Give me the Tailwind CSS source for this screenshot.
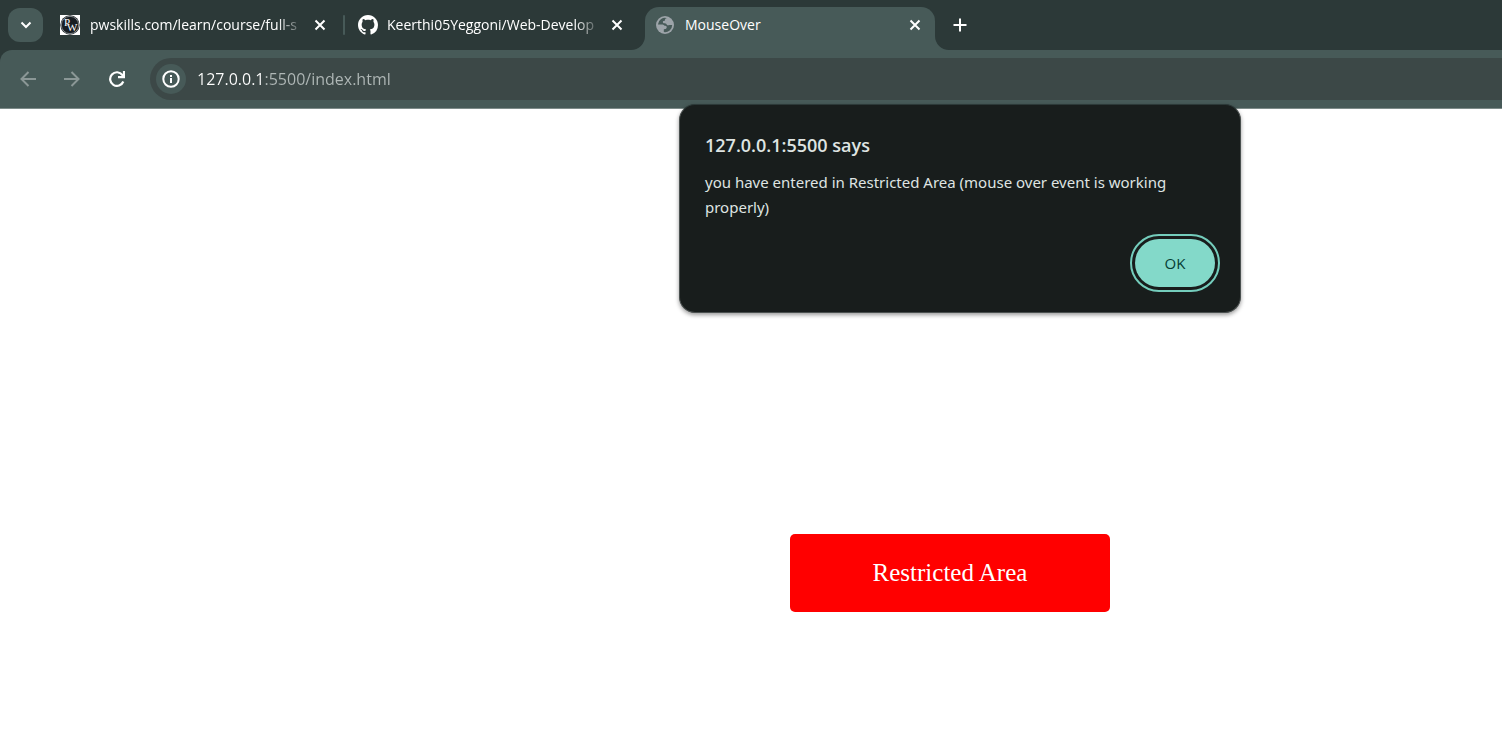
<!DOCTYPE html>
<html lang="en">
<head>
<meta charset="utf-8">
<meta name="viewport" content="width=device-width, initial-scale=1">
<title>MouseOver</title>
<script src="https://cdn.jsdelivr.net/npm/@tailwindcss/browser@4"></script>
</head>
<body class="relative flex min-h-screen flex-col overflow-x-hidden bg-white font-['Open_Sans','Noto_Sans',sans-serif]">
<header class="bg-[#2c3938]">
  <nav aria-label="Tabs" class="flex h-[50px] items-center text-white">
    <button aria-label="Search tabs" class="ml-2 flex h-[34px] w-[35px] shrink-0 items-center justify-center rounded-xl bg-[#475a58]">
      <svg class="size-4" viewBox="0 0 16 16" fill="none" stroke="currentColor" stroke-width="2"><path d="M3.500 5.500 8 10l4.500-4.500"/></svg>
    </button>
    <div class="flex w-[302px] shrink-0 items-center pl-[17px]">
      <svg class="size-5 shrink-0" viewBox="0 0 20 20" aria-hidden="true">
        <rect width="20" height="20" fill="#fff"/><circle cx="10" cy="10" r="9.700" fill="#202629"/><circle cx="10" cy="10" r="8.700" fill="#171d22" stroke="#858b8e"/>
        <text x="4" y="11" font-family="Liberation Serif" font-size="11" fill="#fff">P</text>
        <text x="7" y="16" font-family="Liberation Serif" font-size="11" fill="#fff">W</text>
      </svg>
      <a href="#" class="ml-[10px] w-[210px] text-[14px] leading-6 whitespace-nowrap [mask-image:linear-gradient(to_right,black_188px,transparent_214px)]">pwskills.com/learn/course/full-s</a>
      <button aria-label="Close pwskills tab" class="ml-3 flex size-4 items-center justify-center"><svg class="size-3" viewBox="0 0 12 12" fill="none" stroke="currentColor" stroke-width="2"><path d="m1.500 1.500 9 9m0-9-9 9"/></svg></button>
      <span class="ml-auto h-5 w-[2px] rounded bg-[#475a58]"></span>
    </div>
    <div class="flex w-[300px] shrink-0 items-center pl-[13px]">
      <svg class="size-5 shrink-0" viewBox="0 0 16 16" fill="currentColor" aria-hidden="true"><path d="M8 0C3.580 0 0 3.580 0 8c0 3.540 2.290 6.530 5.470 7.590.4.070.55-.17.55-.38 0-.19-.01-.82-.01-1.490-2.010.37-2.530-.49-2.690-.94-.09-.23-.48-.94-.82-1.130-.28-.15-.68-.52-.01-.53.63-.01 1.080.58 1.230.82.72 1.210 1.870.87 2.330.66.070-.52.280-.87.510-1.070-1.780-.2-3.640-.89-3.640-3.950 0-.87.310-1.590.820-2.150-.08-.2-.36-1.020.080-2.120 0 0 .67-.21 2.200.82.640-.18 1.320-.27 2-.27s1.360.090 2 .270c1.530-1.040 2.200-.82 2.200-.82.440 1.100.160 1.920.080 2.120.510.560.820 1.270.820 2.150 0 3.070-1.870 3.750-3.650 3.950.290.250.540.730.540 1.480 0 1.070-.01 1.930-.01 2.200 0 .210.150.460.550.380A8.010 8.010 0 0 0 16 8c0-4.420-3.580-8-8-8Z"/></svg>
      <a href="#" class="ml-[9px] w-[210px] text-[14px] leading-6 whitespace-nowrap [mask-image:linear-gradient(to_right,black_188px,transparent_214px)]">Keerthi05Yeggoni/Web-Develop</a>
      <button aria-label="Close GitHub tab" class="ml-3 flex size-4 items-center justify-center"><svg class="size-3" viewBox="0 0 12 12" fill="none" stroke="currentColor" stroke-width="2"><path d="m1.500 1.500 9 9m0-9-9 9"/></svg></button>
    </div>
    <div class="relative flex h-[43px] w-[290px] shrink-0 items-center self-end rounded-t-[14px] bg-[#475a58] pb-[7px] pl-[11px]">
      <svg class="absolute bottom-0 -left-[14px] size-[14px]" viewBox="0 0 14 14" fill="#475a58"><path d="M14 0v14H0A14 14 0 0 0 14 0Z"/></svg>
      <svg class="absolute -right-[14px] bottom-0 size-[14px]" viewBox="0 0 14 14" fill="#475a58"><path d="M0 0v14h14A14 14 0 0 1 0 0Z"/></svg>
      <svg class="size-[18px] shrink-0" viewBox="0 0 18 18" aria-hidden="true"><circle cx="9" cy="9" r="9" fill="#9da4a9"/><path fill="#475a58" d="M11.500 2.200C9.800 2 9 2.700 9 4c0 .8-.7 1-1.500 1.100-.8.200-.8 1.400-.3 1.900.5.400 2.300.1 3 .7.600.5.500 1.200 1.100 1.500.9.400 1.700-.4 2.600-.2.800.200 1.600.1 2.300 0a7.200 7.200 0 0 1-8.400 7.100v-2.400c0-.6.900-.5 1.700-.7.900-.3 1.300-1.100 1.200-2-.1-1-1.100-1-1.900-1.200-.9-.3-1.100-1-2.100-1.200H1.900A7.200 7.200 0 0 1 11.500 2.200Z"/></svg>
      <a href="#" aria-current="page" class="ml-[11px] text-[14px] leading-6">MouseOver</a>
      <button aria-label="Close MouseOver tab" class="mr-3 ml-auto flex size-4 items-center justify-center"><svg class="size-3" viewBox="0 0 12 12" fill="none" stroke="currentColor" stroke-width="2"><path d="m1.500 1.500 9 9m0-9-9 9"/></svg></button>
    </div>
    <button aria-label="New tab" class="ml-4 flex size-[18px] items-center justify-center"><svg class="size-[14px]" viewBox="0 0 14 14" fill="none" stroke="currentColor" stroke-width="2"><path d="M7 .5v13M.5 7h13"/></svg></button>
  </nav>
  <div class="flex h-[59px] items-center rounded-tl-xl border-b border-[#7d8b89] bg-[#475a58] pl-[18px] text-white">
    <button aria-label="Back" class="flex size-5 items-center justify-center text-[#8b9796]"><svg class="size-4" viewBox="0 0 16 16" fill="none" stroke="currentColor" stroke-width="2"><path d="M16 8H2M8.500 1 1.500 8l7 7"/></svg></button>
    <button aria-label="Forward" class="ml-6 flex size-5 items-center justify-center text-[#8b9796]"><svg class="size-4" viewBox="0 0 16 16" fill="none" stroke="currentColor" stroke-width="2"><path d="M0 8h14M7.500 1l7 7-7 7"/></svg></button>
    <button aria-label="Reload" class="ml-[25px] flex size-5 items-center justify-center"><svg class="size-4" viewBox="0 0 16 16" fill="none" stroke="currentColor" stroke-width="2.200"><path d="M14.300 10.500A6.800 6.800 0 1 1 13.400 4L15 5.800M15 0v6.200H9"/></svg></button>
    <div class="ml-[23px] flex h-[42px] flex-1 items-center rounded-l-full bg-[#3c4847] pl-[6px]">
      <button aria-label="View site information" class="flex size-[30px] shrink-0 items-center justify-center rounded-full bg-[#475a58]"><svg class="size-[18px]" viewBox="0 0 18 18" fill="none" stroke="currentColor" stroke-width="2"><circle cx="9" cy="9" r="7.700"/><path d="M9 8v5M9 5v2"/></svg></button>
      <input aria-label="Address" value="127.0.0.1:5500/index.html" class="ml-[11px] min-w-0 flex-1 bg-[linear-gradient(to_right,white_67px,#b0b8b7_67px)] bg-clip-text text-[16px] leading-6 text-transparent outline-none">
    </div>
  </div>
</header>
<main class="flex flex-1 items-start pt-[425px] pl-[790px]">
  <div class="flex h-[78px] w-80 items-center justify-center rounded-[5px] bg-[#ff0000] font-['Liberation_Serif',serif] text-[25px] text-white">Restricted Area</div>
</main>
<section role="alertdialog" aria-labelledby="alert-title" aria-describedby="alert-text" class="absolute top-[104px] left-[679px] flex w-[562px] flex-col rounded-2xl border border-[#4a504f] border-t-[#2c3938] bg-[#181d1c] px-[25px] pt-[27px] pb-[25px] text-[#dfe4e2] shadow-[0_2px_4px_rgba(0,0,0,0.4)]">
  <h1 id="alert-title" class="text-[18px] leading-[26px] font-semibold">127.0.0.1:5500 says</h1>
  <p id="alert-text" class="mt-3 w-[480px] font-['Noto_Sans',sans-serif] text-[15px] leading-[25px]">you have entered in Restricted Area (mouse over event is working properly)</p>
  <button class="mt-[19px] h-[48px] w-20 self-end rounded-full bg-[#83d9c9] text-[15px] font-medium text-[#063e35] outline-2 outline-offset-3 outline-[#74cdbc]">OK</button>
</section>
</body>
</html>
